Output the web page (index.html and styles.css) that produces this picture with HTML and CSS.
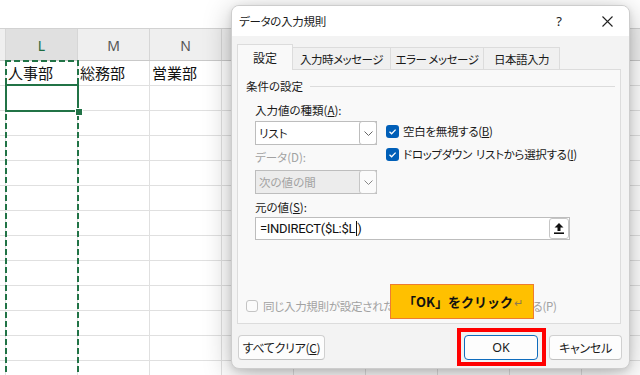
FILE: index.html
```html
<!DOCTYPE html>
<html lang="ja">
<head>
<meta charset="utf-8">
<title>データの入力規則</title>
<link rel="stylesheet" href="styles.css">
</head>
<body>
<div class="sheet">
  <div class="topbar"></div>
  <div class="hrow">
    <div class="stub"></div>
    <div class="hcell sel">L</div>
    <div class="hcell">M</div>
    <div class="hcell">N</div>
    <div class="hcell">O</div>
    <div class="hcell">P</div>
    <div class="hcell">Q</div>
    <div class="hcell">R</div>
    <div class="hcell">S</div>
    <div class="hcell">T</div>
  </div>
  <div class="row">
    <div class="stub"></div>
    <div class="cell">人事部</div>
    <div class="cell">総務部</div>
    <div class="cell">営業部</div>
    <div class="cell"></div>
    <div class="cell"></div>
    <div class="cell"></div>
    <div class="cell"></div>
    <div class="cell"></div>
    <div class="cell"></div>
  </div>
  <div class="rest"></div>
</div>

<div class="marquee"></div>
<div class="active"><span class="handle"></span></div>

<div class="dialog">
  <div class="titlebar">
    <span class="title">データの入力規則</span>
    <span class="help">?</span>
    <span class="close"><svg width="11" height="11" viewBox="0 0 11 11"><path d="M0.5 0.5L10.5 10.5M10.5 0.5L0.5 10.5" stroke="#222" stroke-width="1.1" fill="none"/></svg></span>
  </div>
  <div class="dbody">
    <div class="tabs">
      <div class="tab on w1">設定</div>
      <div class="tab w2">入力時メッセージ</div>
      <div class="tab w3">エラー メッセージ</div>
      <div class="tab w4">日本語入力</div>
    </div>
    <div class="panel">
      <div class="group"><span>条件の設定</span><span class="rule"></span></div>
      <div class="form">
        <div class="label">入力値の種類(<u>A</u>):</div>
        <div class="combo"><span class="ctext">リスト</span><span class="carrow"><svg width="9" height="5" viewBox="0 0 9 5"><polyline points="0.5,0.5 4.5,4.5 8.5,0.5" fill="none" stroke="#666" stroke-width="1"/></svg></span></div>
        <div class="checks">
          <div class="chk"><span class="box on"><svg width="13" height="13" viewBox="0 0 13 13"><polyline points="3.5,6.8 5.6,8.8 9.6,4.6" fill="none" stroke="#fff" stroke-width="1.3"/></svg></span>空白を無視する(<u>B</u>)</div>
          <div class="chk"><span class="box on"><svg width="13" height="13" viewBox="0 0 13 13"><polyline points="3.5,6.8 5.6,8.8 9.6,4.6" fill="none" stroke="#fff" stroke-width="1.3"/></svg></span>ドロップダウン<span class="sp"></span>リストから選択する(<u>I</u>)</div>
        </div>
        <div class="label dis">データ(D):</div>
        <div class="combo dis"><span class="ctext">次の値の間</span><span class="carrow"><svg width="9" height="5" viewBox="0 0 9 5"><polyline points="0.5,0.5 4.5,4.5 8.5,0.5" fill="none" stroke="#888" stroke-width="1"/></svg></span></div>
      </div>
      <div class="label src-label">元の値(<u>S</u>):</div>
      <div class="source">
        <span class="val">=INDIRECT($L:$L<span class="caret"></span>)</span>
        <span class="upbtn"><svg width="10" height="11" viewBox="0 0 10 11"><path d="M5 0L9.5 4.6H6.5V8H3.5V4.6H0.5Z" fill="#111"/><rect x="0" y="9.4" width="10" height="1.6" fill="#111"/></svg></span>
      </div>
      <div class="applyall"><span class="box off"></span>同じ入力規則が設定されたすべてのセルに変更を適用する(P)</div>
    </div>
    <div class="buttons">
      <span class="btn clear">すべてクリア(<u>C</u>)</span>
      <span class="spacer"></span>
      <span class="btn ok">OK</span>
      <span class="btn cancel">キャンセル</span>
    </div>
  </div>
</div>

<div class="callout">「OK」をクリック<span class="ret">↵</span></div>
<div class="redframe"></div>
</body>
</html>
```
FILE: styles.css
```css
* { box-sizing: border-box; }
html, body { margin: 0; padding: 0; }
body {
  width: 640px;
  height: 375px;
  overflow: hidden;
  position: relative;
  background: #fff;
  font-family: "Noto Sans CJK JP", "Noto Sans", sans-serif;
  color: #1a1a1a;
}

/* ---------- spreadsheet ---------- */
.sheet { width: 640px; overflow: hidden; }
.topbar { height: 29px; border-bottom: 1px solid #d2d2d2; }
.hrow {
  display: flex;
  height: 32px;
  background: #efefef;
  border-bottom: 1px solid #c9c9c9;
}
.stub { width: 6px; flex: none; border-right: 1px solid #d6d6d6; }
.hcell {
  width: 72px;
  flex: none;
  border-right: 1px solid #d6d6d6;
  display: flex;
  align-items: center;
  justify-content: center;
  font-family: "Noto Sans", sans-serif;
  font-size: 14px;
  color: #555;
  padding-top: 2px;
}
.hcell.sel { background: #e0e0e0; color: #1e6b40; }
.row {
  display: flex;
  height: 25px;
  border-bottom: 1px solid #e0e0e0;
}
.row .stub { border-right-color: #e0e0e0; }
.cell {
  width: 72px;
  flex: none;
  border-right: 1px solid #e0e0e0;
  font-size: 15px;
  line-height: 24px;
  padding-left: 2px;
  color: #111;
  white-space: nowrap;
}
.rest {
  height: 300px;
  background-image:
    repeating-linear-gradient(to bottom, transparent 0 24px, #e0e0e0 24px 25px),
    repeating-linear-gradient(to right, transparent 0 71px, #e0e0e0 71px 72px),
    linear-gradient(to right, transparent 5px, #e0e0e0 5px 6px, transparent 6px);
  background-position: 0 0, 6px 0, 0 0;
}

.marquee {
  position: absolute;
  left: 5px;
  top: 60px;
  width: 74px;
  height: 330px;
  background:
    repeating-linear-gradient(to right, #217346 0 6px, transparent 6px 9px) left top / 100% 2px no-repeat,
    repeating-linear-gradient(to bottom, #217346 0 6px, transparent 6px 9px) left top / 2px 100% no-repeat,
    repeating-linear-gradient(to bottom, #217346 0 6px, transparent 6px 9px) right top / 2px 100% no-repeat;
}
.active {
  position: absolute;
  left: 5px;
  top: 84px;
  width: 74px;
  height: 28px;
  border: 2px solid #217346;
}
.handle {
  position: absolute;
  right: -5px;
  bottom: -5px;
  width: 6px;
  height: 6px;
  background: #217346;
  outline: 1px solid #fff;
}

/* ---------- dialog ---------- */
.dialog {
  position: absolute;
  left: 231px;
  top: 5px;
  width: 399px;
  height: 364px;
  border: 1px solid #cdcdcd;
  border-radius: 8px;
  background: #f3f3f3;
  overflow: hidden;
  box-shadow: 0 6px 28px rgba(0, 0, 0, 0.28), 0 2px 6px rgba(0, 0, 0, 0.1);
  font-size: 11.5px;
  font-feature-settings: "palt";
}
.titlebar {
  height: 30px;
  background: #fff;
  display: flex;
  align-items: center;
  padding-left: 7px;
}
.title { flex: 1; font-size: 11.5px; color: #1a1a1a; letter-spacing: -0.3px; }
.help {
  font-family: "Noto Sans", sans-serif;
  font-size: 13px;
  width: 20px;
  text-align: center;
  margin-right: 33px;
  color: #222;
}
.close {
  width: 11px;
  height: 11px;
  display: flex;
  margin-right: 16px;
}

.dbody {
  padding: 8px 7px 0 5px;
  display: flex;
  flex-direction: column;
}
.tabs {
  display: flex;
  align-items: flex-end;
  height: 25px;
  position: relative;
  z-index: 1;
}
.tab {
  height: 22px;
  border: 1px solid #dcdcdc;
  border-bottom: none;
  background: #f0f0f0;
  display: flex;
  align-items: center;
  justify-content: center;
  margin-left: -1px;
  white-space: nowrap;
  padding-top: 1px;
  font-size: 11.5px;
  letter-spacing: -0.5px;
}
.tab.on {
  height: 26px;
  margin-bottom: -1px;
  background: #f9f9f9;
  margin-left: 0;
  padding-top: 0;
  font-size: 12px;
  letter-spacing: 0;
}
.w1 { width: 56px; }
.w2 { width: 99px; }
.w3 { width: 94px; }
.w4 { width: 77px; }

.panel {
  height: 255px;
  margin-right: 1px;
  border: 1px solid #dcdcdc;
  background: #f9f9f9;
  padding: 8px 5px 7px 8px;
  display: flex;
  flex-direction: column;
}
.group {
  height: 16px;
  display: flex;
  align-items: center;
  color: #1a1a1a;
}
.rule { flex: 1; height: 1px; background: #dcdcdc; margin-left: 7px; }

.form {
  margin: 8px 0 0 9px;
  display: grid;
  grid-template-columns: 122px auto;
  column-gap: 9px;
  align-items: start;
}
.label { height: 16px; line-height: 16px; white-space: nowrap; }
.label.dis { color: #a2a2a2; }
.form .label:first-child { margin-bottom: 3px; grid-column: 1; }
.form .combo { grid-column: 1; }
.form .combo:not(.dis) { margin-bottom: 4px; }
.form .label.dis { grid-column: 1; margin-bottom: 5px; }
.checks { grid-column: 2; grid-row: 2 / 5; display: flex; flex-direction: column; gap: 3px; letter-spacing: -0.3px; }
.sp { display: inline-block; width: 4px; }

.combo {
  height: 24px;
  width: 122px;
  border: 1px solid #bdbdbd;
  background: #fff;
  display: flex;
  align-items: center;
}
.ctext { flex: 1; padding-left: 3px; white-space: nowrap; }
.carrow {
  width: 18px;
  height: 24px;
  margin: -1px -1px -1px 0;
  border: 1px solid #bdbdbd;
  border-radius: 3px;
  background: #fff;
  display: flex;
  align-items: center;
  justify-content: center;
}
.combo.dis { background: #ececec; color: #a2a2a2; }
.combo.dis .carrow { background: #fbfbfb; border-color: #c6c6c6; }

.chk {
  height: 20px;
  display: flex;
  align-items: center;
  white-space: nowrap;
}
.box {
  width: 13px;
  height: 13px;
  border-radius: 3px;
  margin-right: 4px;
  flex: none;
  display: flex;
}
.box.on { background: #005fb8; }
.box.off { border: 1px solid #c4c4c4; background: #fbfbfb; width: 12px; height: 12px; margin-right: 5px; }

.src-label { margin: 5px 0 2px 9px; }
.source {
  margin-left: 9px;
  width: 315px;
  height: 23px;
  border: 1px solid #bdbdbd;
  background: #fff;
  display: flex;
  align-items: center;
  padding-left: 4px;
}
.val {
  flex: 1;
  font-family: Roboto, "Noto Sans", sans-serif;
  font-size: 13px;
  letter-spacing: -0.3px;
  color: #111;
  display: flex;
  align-items: center;
  white-space: nowrap;
}
.caret {
  display: inline-block;
  width: 1px;
  height: 15px;
  background: #111;
  margin: 0 0 0 1px;
}
.upbtn {
  width: 20px;
  height: 21px;
  border: 1px solid #c6c6c6;
  border-radius: 3px;
  background: #fff;
  display: flex;
  align-items: center;
  justify-content: center;
}

.applyall {
  margin-top: auto;
  height: 20px;
  display: flex;
  align-items: center;
  color: #a2a2a2;
  white-space: nowrap;
  overflow: hidden;
  letter-spacing: -0.3px;
}

.buttons {
  display: flex;
  margin-top: 11px;
  height: 25px;
}
.btn {
  height: 25px;
  border: 1px solid #d0d0d0;
  border-bottom-color: #c0c0c0;
  border-radius: 4px;
  background: #fdfdfd;
  display: flex;
  align-items: center;
  justify-content: center;
  white-space: nowrap;
  color: #1a1a1a;
  font-size: 12px;
  letter-spacing: -0.3px;
}
.clear { width: 87px; margin-left: 1px; }
.spacer { flex: 1; }
.ok { width: 74px; border-color: #0f6cbd; font-family: "Noto Sans", sans-serif; font-size: 12.5px; letter-spacing: 0; }
.cancel { width: 73px; margin-left: 11px; }

/* ---------- annotations ---------- */
.callout {
  position: absolute;
  left: 390px;
  top: 284px;
  width: 144px;
  height: 35px;
  background: #ffc000;
  border: 1px solid #ed7d31;
  display: flex;
  align-items: center;
  padding-left: 12px;
  font-size: 13px;
  font-weight: bold;
  color: #111;
  white-space: nowrap;
}
.ret { font-weight: normal; color: #8c7a50; font-size: 11px; margin-left: 1px; }
.redframe {
  position: absolute;
  left: 457px;
  top: 328px;
  width: 89px;
  height: 38px;
  border: 4px solid #ff0000;
}
```
